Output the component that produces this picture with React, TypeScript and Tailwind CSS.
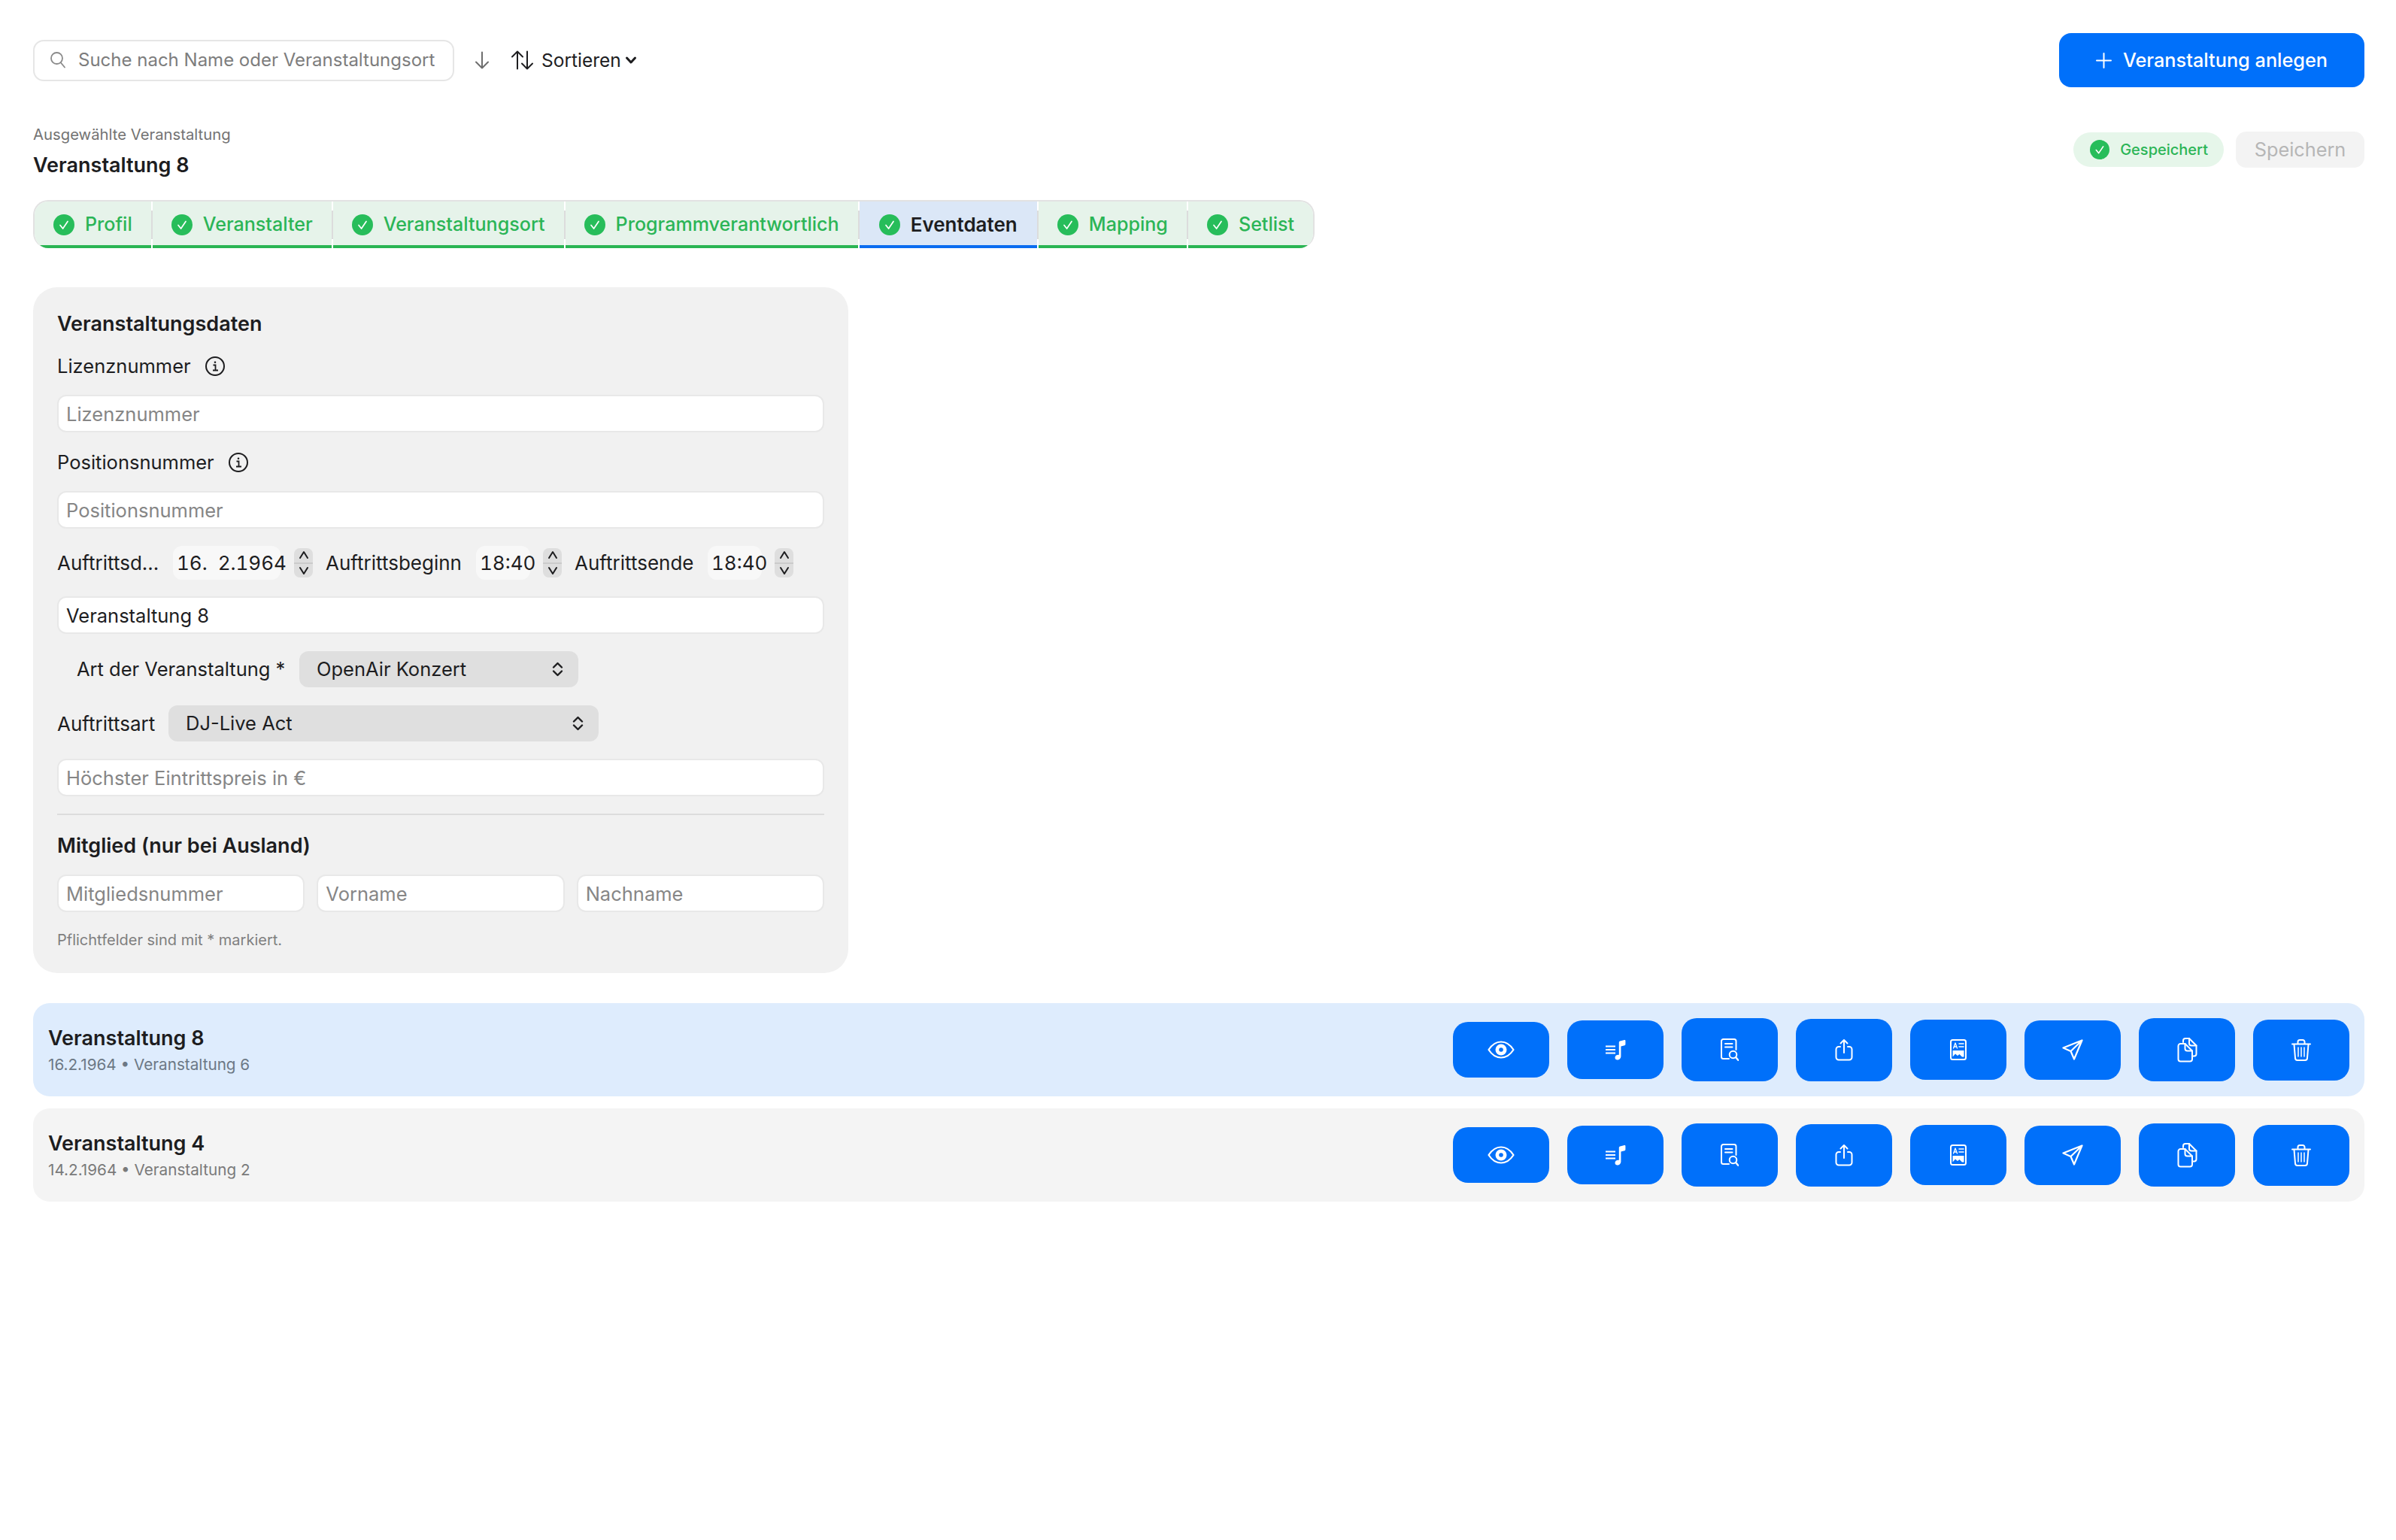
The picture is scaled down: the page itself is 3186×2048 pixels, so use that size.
import type { ReactNode } from 'react'

const tabs = ['Profil', 'Veranstalter', 'Veranstaltungsort', 'Programmverantwortlich', 'Eventdaten', 'Mapping', 'Setlist']
const ACTIVE = 'Eventdaten'

const CheckCircle = ({ size }: { size: number }) => (
  <svg width={size} height={size} viewBox="0 0 28 28" className="shrink-0">
    <circle cx="14" cy="14" r="14" fill="#27bd5a" />
    <path d="M9 14.500l3.600 4.500L19 9.500" fill="none" stroke="#fff" strokeWidth="1.700" strokeLinecap="round" strokeLinejoin="round" />
  </svg>
)

const InfoIcon = () => (
  <svg width="28" height="28" viewBox="0 0 28 28" fill="none" stroke="#1d1d1f" strokeWidth="2">
    <circle cx="14" cy="14" r="12" />
    <path d="M11.500 12.500H14.500V19.500M11 19.500H18" strokeWidth="1.800" />
    <circle cx="14" cy="8.800" r="1.300" fill="#1d1d1f" stroke="none" />
  </svg>
)

const Updown = () => (
  <svg width="17" height="20" viewBox="0 0 17 20" fill="none" stroke="#1d1d1f" strokeWidth="2.400" strokeLinecap="round" strokeLinejoin="round">
    <path d="M3 7.500L8.500 2L14 7.500M3 12.500L8.500 18L14 12.500" />
  </svg>
)

function Stepper() {
  return (
    <div className="flex h-[39px] w-[25px] shrink-0 flex-col items-center justify-between rounded-[8px] bg-[#dedede] py-[3px]">
      <svg width="18" height="12" viewBox="0 0 18 12" fill="none" stroke="#1d1d1f" strokeWidth="2" strokeLinecap="round" strokeLinejoin="round"><path d="M4 10L9 2L14 10" /></svg>
      <div className="h-[2px] w-full bg-[#cbcbcb]" />
      <svg width="18" height="12" viewBox="0 0 18 12" fill="none" stroke="#1d1d1f" strokeWidth="2" strokeLinecap="round" strokeLinejoin="round"><path d="M4 2L9 10L14 2" /></svg>
    </div>
  )
}

function Field({ placeholder, value, className = '' }: { placeholder?: string; value?: string; className?: string }) {
  return (
    <input
      readOnly
      placeholder={placeholder}
      value={value ?? ''}
      className={`h-[50px] w-full min-w-0 rounded-[12px] border-2 border-[#e8e8e8] bg-white px-[10px] text-[25.500px] text-[#1d1d1f] outline-none placeholder:text-[#868686] ${className}`}
    />
  )
}

function Select({ label, className }: { label: string; className: string }) {
  return (
    <div className={`flex h-[48px] items-center justify-between rounded-[12px] bg-[#dfdfdf] pl-[23px] pr-[19px] text-[25.500px] text-[#1d1d1f] ${className}`}>
      <span>{label}</span>
      <Updown />
    </div>
  )
}

function DateBox({ value, className }: { value: string; className: string }) {
  return (
    <div className={`flex h-[45px] shrink-0 items-center whitespace-pre rounded-[12px] bg-[#f8f8f8] pl-[5px] text-[26px] tabular-nums text-[#1d1d1f] ${className}`}>
      {value}
    </div>
  )
}

const stroke = { fill: 'none', stroke: '#fff', strokeWidth: 2, strokeLinecap: 'round', strokeLinejoin: 'round' } as const

const icons: { h: string; icon: ReactNode }[] = [
  {
    h: 'h-[74px]',
    icon: (
      <svg width="36" height="24" viewBox="0 0 36 24">
        <path d="M1.500 12C6 5 11.500 1.500 18 1.500S30 5 34.500 12C30 19 24.500 22.500 18 22.500S6 19 1.500 12Z" {...stroke} strokeWidth={2.200} />
        <circle cx="18" cy="12" r="7.500" fill="#fff" />
        <circle cx="18" cy="12" r="2.800" fill="#0070fa" />
      </svg>
    ),
  },
  {
    h: 'h-[78px]',
    icon: (
      <svg width="28" height="28" viewBox="0 0 28 28">
        <path d="M1 9.500H14M1 14H14M1 18.500H14" {...stroke} strokeWidth={2} strokeLinecap="butt" />
        <path d="M18.800 4.500C18.800 3.500 19.300 2.900 20.200 2.600L26 1C26.800 .8 27.400 1.300 27.400 2.100V6.800C27.400 7.500 27 8 26.300 8.200L21.400 9.500V22.500C21.400 25.300 19.500 27.500 16.800 27.500C14.800 27.500 13.500 26.300 13.500 24.500C13.500 22.400 15.300 20.800 17.800 20.800C18 20.800 18.500 20.800 18.800 20.900Z" fill="#fff" />
      </svg>
    ),
  },
  {
    h: 'h-[84px]',
    icon: (
      <svg width="24" height="30" viewBox="0 0 24 30">
        <path d="M11 27H3.500A2.500 2.500 0 0 1 1 24.500V3.500A2.500 2.500 0 0 1 3.500 1H18A2.500 2.500 0 0 1 20.500 3.500V15" {...stroke} />
        <path d="M6 7H15.500M6 11.500H15.500" {...stroke} />
        <circle cx="16.500" cy="21.500" r="4.800" {...stroke} />
        <path d="M20 25L23.500 29" {...stroke} strokeWidth={2.400} />
      </svg>
    ),
  },
  {
    h: 'h-[83px]',
    icon: (
      <svg width="24" height="30" viewBox="0 0 24 30">
        <path d="M7 11H5A3.500 3.500 0 0 0 1.500 14.500V25A3.500 3.500 0 0 0 5 28.500H19A3.500 3.500 0 0 0 22.500 25V14.500A3.500 3.500 0 0 0 19 11H17" {...stroke} />
        <path d="M12 19V2M7.500 6.500L12 2L16.500 6.500" {...stroke} />
      </svg>
    ),
  },
  {
    h: 'h-[80px]',
    icon: (
      <svg width="22" height="28" viewBox="0 0 22 28">
        <rect x="1" y="1" width="20" height="26" rx="2.500" {...stroke} />
        <path d="M4.500 12L7 5L9.500 12M5.500 10H8.500" {...stroke} strokeWidth={1.300} />
        <path d="M12 6H18M12 10H18" {...stroke} strokeWidth={1.600} />
        <path d="M3.500 15H18.500V23.500H16L12.500 20L10 22L7 19.500L3.500 23.500Z" fill="#fff" />
      </svg>
    ),
  },
  {
    h: 'h-[79px]',
    icon: (
      <svg width="28" height="28" viewBox="0 0 28 28">
        <path d="M26.500 1.500L1.500 11.500L11.500 16L16 26.500ZM11.500 16L26.500 1.500" {...stroke} strokeWidth={2.200} />
      </svg>
    ),
  },
  {
    h: 'h-[84px]',
    icon: (
      <svg width="27" height="33" viewBox="0 0 27 33">
        <path d="M8 6V4A3 3 0 0 1 11 1H16L25.500 10.500V21.500A3 3 0 0 1 22.500 24.500H20" {...stroke} />
        <path d="M16 1V7.500A3 3 0 0 0 19 10.500H25.500" {...stroke} />
        <path d="M4.500 8H10.500L20 17.500V28.500A3 3 0 0 1 17 31.500H4.500A3 3 0 0 1 1.500 28.500V11A3 3 0 0 1 4.500 8Z" {...stroke} />
        <path d="M10.500 8V14.500A3 3 0 0 0 13.500 17.500H20" {...stroke} />
      </svg>
    ),
  },
  {
    h: 'h-[81px]',
    icon: (
      <svg width="26" height="29" viewBox="0 0 26 29">
        <path d="M1 6.500H25" {...stroke} />
        <path d="M8.500 6V3.500A2.500 2.500 0 0 1 11 1H15A2.500 2.500 0 0 1 17.500 3.500V6" {...stroke} />
        <path d="M3.500 7L5 25A3 3 0 0 0 8 28H18A3 3 0 0 0 21 25L22.500 7" {...stroke} />
        <path d="M9 10.500V23.500M13 10.500V23.500M17 10.500V23.500" {...stroke} strokeWidth={1.500} strokeLinecap="butt" />
      </svg>
    ),
  },
]

function Row({ title, sub, selected }: { title: string; sub: string; selected?: boolean }) {
  return (
    <div className={`flex h-[124px] items-center justify-between rounded-[22px] pl-[20px] pr-[20px] ${selected ? 'bg-[#deecfd]' : 'bg-[#f4f4f4]'}`}>
      <div>
        <div className="text-[27px] font-semibold leading-[36px] text-[#1d1d1f]">{title}</div>
        <div className={`mt-[3px] text-[20.700px] leading-[28px] ${selected ? 'text-[#6c7885]' : 'text-[#7a7a7a]'}`}>{sub}</div>
      </div>
      <div className="flex items-center gap-[24px]">
        {icons.map((item, i) => (
          <button key={i} className={`flex w-[128px] items-center justify-center rounded-[20px] bg-[#0070fa] ${item.h}`}>
            {item.icon}
          </button>
        ))}
      </div>
    </div>
  )
}

export default function App() {
  return (
    <div className="min-h-[2048px] bg-white pl-[44px] pr-[42px] pt-[44px] font-['Inter',sans-serif] text-[#1d1d1f]">
      <div className="flex h-[72px] items-center justify-between">
        <div className="flex items-center">
          <div className="flex h-[55px] w-[560px] items-center rounded-[14px] border-2 border-[#e6e6e6] bg-white pl-[20px]">
            <svg width="22" height="24" viewBox="0 0 22 24" fill="none" stroke="#8a8a8a" strokeWidth="1.800" strokeLinecap="round">
              <circle cx="9.500" cy="9.500" r="7.500" /><path d="M15 15.500L20 21.500" />
            </svg>
            <input readOnly placeholder="Suche nach Name oder Veranstaltungsort" className="ml-[16px] w-[490px] bg-transparent text-[24px] outline-none placeholder:text-[#7d7d7d]" />
          </div>
          <svg className="ml-[26px]" width="22" height="24" viewBox="0 0 22 24" fill="none" stroke="#6e6e6e" strokeWidth="2" strokeLinecap="round" strokeLinejoin="round">
            <path d="M11 1.500V22.500M3 14.500L11 22.500L19 14.500" />
          </svg>
          <svg className="ml-[27px]" width="31" height="26" viewBox="0 0 31 26" fill="none" stroke="#1d1d1f" strokeWidth="2" strokeLinecap="round" strokeLinejoin="round">
            <path d="M9 24.500V1.500M2 8.500L9 1.500L16 8.500M22 1.500V24.500M15 17.500L22 24.500L29 17.500" />
          </svg>
          <span className="ml-[10px] text-[24.500px] font-normal">Sortieren</span>
          <svg className="ml-[5px]" width="16" height="12" viewBox="0 0 16 12" fill="none" stroke="#1d1d1f" strokeWidth="3" strokeLinecap="round" strokeLinejoin="round">
            <path d="M2.500 3L8 9L13.500 3" />
          </svg>
        </div>
        <button className="flex h-[72px] w-[406px] items-center justify-center gap-[15px] rounded-[16px] bg-[#0070fa] text-[25.300px] font-medium text-white">
          <svg width="21" height="21" viewBox="0 0 21 21" stroke="#fff" strokeWidth="2" strokeLinecap="round"><path d="M10.500 1V20M1 10.500H20" /></svg>
          Veranstaltung anlegen
        </button>
      </div>

      <div className="mt-[50px] flex h-[72px] items-center justify-between">
        <div>
          <div className="text-[20.300px] leading-[24px] text-[#737373]">Ausgewählte Veranstaltung</div>
          <div className="mt-[12px] text-[27px] font-semibold leading-[34px]">Veranstaltung 8</div>
        </div>
        <div className="mb-[6px] flex items-center gap-[16px]">
          <div className="flex h-[46px] items-center gap-[14px] rounded-full bg-[#e6f6ea] pl-[22px] pr-[21px] text-[20px] font-medium text-[#2bb556]">
            <CheckCircle size={26} />
            Gespeichert
          </div>
          <div className="flex h-[48px] w-[171px] items-center justify-center rounded-[14px] bg-[#f3f3f3] text-[25.300px] text-[#b6b6b6]">Speichern</div>
        </div>
      </div>

      <div className="mt-[28px] flex h-[64px] w-fit overflow-hidden rounded-[20px] border-x-2 border-t-2 border-[#e2e2e2]">
        {tabs.map((tab, i) => (
          <div key={tab} className="flex">
            {i > 0 && (
              <div className="flex w-[2px] items-center bg-white"><div className="h-[38px] w-full bg-[#dcdcdc]" /></div>
            )}
            <div className={`flex items-center gap-[14px] border-b-4 pt-[3px] ${tab === ACTIVE ? 'border-[#0a6cf0] bg-[#dbe7f7] px-[26px] text-[26px] font-semibold text-[#1d1d1f]' : 'border-[#2ab553] bg-[#e6f3ea] px-[25px] text-[25.100px] font-medium text-[#2bb556]'}`}>
              <CheckCircle size={28} />
              {tab}
            </div>
          </div>
        ))}
      </div>

      <div className="mt-[52px] w-[1084px] rounded-[32px] bg-[#f1f1f1] px-[32px] pb-[30px] pt-[32px] text-[25.500px]">
        <div className="text-[27px] font-semibold leading-[34px]">Veranstaltungsdaten</div>
        <div className="mt-[21px] flex h-[36px] items-center gap-[18px]">Lizenznummer <InfoIcon /></div>
        <Field placeholder="Lizenznummer" className="mt-[20px]" />
        <div className="mt-[22px] flex h-[36px] items-center gap-[18px]">Positionsnummer <InfoIcon /></div>
        <Field placeholder="Positionsnummer" className="mt-[20px]" />
        <div className="mt-[23px] flex h-[45px] items-center text-[26px]">
          <span className="w-[154px] shrink-0">Auftrittsd...</span>
          <DateBox value="16.  2.1964" className="w-[143px]" />
          <div className="ml-[18px]"><Stepper /></div>
          <span className="ml-[17px] w-[200px] shrink-0">Auftrittsbeginn</span>
          <DateBox value="18:40" className="w-[72px]" />
          <div className="ml-[17px]"><Stepper /></div>
          <span className="ml-[17px] w-[177px] shrink-0">Auftrittsende</span>
          <DateBox value="18:40" className="w-[72px]" />
          <div className="ml-[17px]"><Stepper /></div>
        </div>
        <Field value="Veranstaltung 8" className="mt-[22px]" />
        <div className="mt-[23px] flex items-center pl-[26px]">
          <span className="w-[296px] shrink-0">Art der Veranstaltung *</span>
          <Select label="OpenAir Konzert" className="w-[371px]" />
        </div>
        <div className="mt-[24px] flex items-center">
          <span className="w-[148px] shrink-0 text-[26px]">Auftrittsart</span>
          <Select label="DJ-Live Act" className="w-[572px]" />
        </div>
        <Field placeholder="Höchster Eintrittspreis in €" className="mt-[23px]" />
        <div className="mt-[23px] h-[2px] bg-[#dcdcdc]" />
        <div className="mt-[24px] text-[27px] font-semibold leading-[34px]">Mitglied (nur bei Ausland)</div>
        <div className="mt-[21px] grid grid-cols-3 gap-[16px]">
          <Field placeholder="Mitgliedsnummer" />
          <Field placeholder="Vorname" />
          <Field placeholder="Nachname" />
        </div>
        <div className="mt-[23px] text-[20px] leading-[28px] text-[#7f7f7f]">Pflichtfelder sind mit * markiert.</div>
      </div>

      <div className="mt-[40px] flex flex-col gap-[16px]">
        <Row title="Veranstaltung 8" sub="16.2.1964 • Veranstaltung 6" selected />
        <Row title="Veranstaltung 4" sub="14.2.1964 • Veranstaltung 2" />
      </div>
    </div>
  )
}
